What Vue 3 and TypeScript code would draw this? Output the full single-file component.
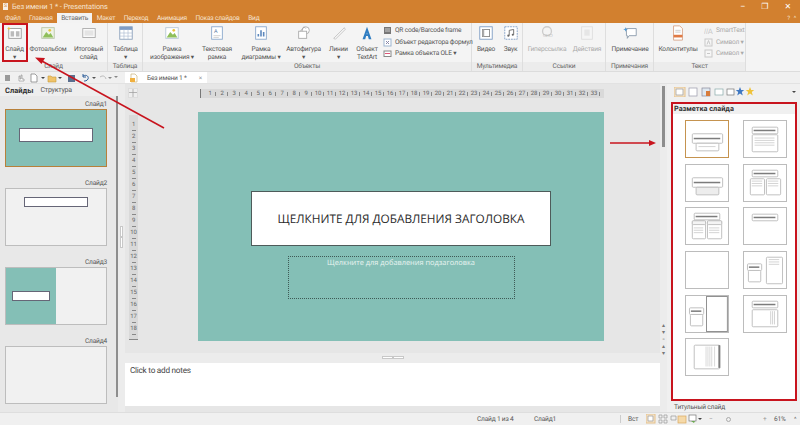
<script setup lang="ts">
type Item = { lines: string[]; w: number; icon: string; off?: boolean };
type Small = { text: string; icon: string; off?: boolean };
type Group = { label: string; w: number; pad: number; items: Item[]; small?: Small[]; smallW?: number };

const ico = {
  slide: `<rect x="2" y="4" width="14" height="11" fill="#fff" stroke="#9a9a9a"/><rect x="4" y="7" width="4" height="6" fill="#bbb"/><rect x="10" y="7" width="4" height="6" fill="#bbb"/><path d="M2 2l1 1.5L4.5 4 3 4.5 2 6 1.4 4.5 0 4l1.4-.5z" fill="#e9c43d"/>`,
  photo: `<rect x="2" y="3" width="14" height="12" fill="#eef3e6" stroke="#b9c6a6"/><path d="M3 14l4-6 3 3 2-2 3 5z" fill="#8fbf5a"/><circle cx="11" cy="6" r="1.5" fill="#e9c43d"/>`,
  sum: `<rect x="2" y="4" width="14" height="10" fill="#fafafa" stroke="#aaa"/><rect x="4" y="6" width="10" height="6" fill="#e4e4e4"/>`,
  table: `<rect x="2" y="2" width="14" height="14" fill="#fff" stroke="#8aa0bb"/><rect x="2" y="2" width="14" height="3.5" fill="#7f9cc4"/><path d="M2 9h14M2 12.5h14M6.7 5v11M11.3 5v11" stroke="#a9b9cf" stroke-width=".7"/>`,
  image: `<rect x="2" y="3" width="14" height="12" fill="#fff" stroke="#b8c8d8"/><path d="M3 14l4-6 3 3 2-2 3 5z" fill="#8fbf5a"/><circle cx="11" cy="6" r="1.5" fill="#e9c43d"/>`,
  text: `<rect x="3" y="2" width="12" height="14" fill="#fff" stroke="#8aa8cc"/><text x="5.6" y="9" font-size="6" font-family="Liberation Sans" fill="#5c7da6">A</text><path d="M5 12h8M5 14h6" stroke="#bbb" stroke-width=".7"/>`,
  chart: `<rect x="3" y="2" width="12" height="14" fill="#fff" stroke="#8aa8cc"/><path d="M6 13v-3M9 13V6M12 13V8" stroke="#5c88bd" stroke-width="1.8"/>`,
  shape: `<circle cx="11" cy="6" r="4" fill="#fff" stroke="#aaa"/><rect x="3" y="7" width="9" height="8" fill="#fff" stroke="#aaa"/><path d="M5 7l4-5 2 2" fill="none" stroke="#aaa"/>`,
  lines: `<path d="M3 15L15 3M5 16L16 5" stroke="#c4c4c4"/><path d="M3 15l2 1M15 3l1 2" stroke="#c4c4c4"/>`,
  art: `<path d="M4 16L9 2l5 14h-3l-1-3.500H8L7 16zM8.600 10.500h.800L9 8.500z" fill="#2f7dc2"/>`,
  video: `<rect x="2" y="2" width="14" height="14" fill="#fff" stroke="#7d9cc4"/><rect x="5" y="5" width="8" height="8" fill="#fff" stroke="#888"/><rect x="5" y="5" width="2" height="8" fill="#aaa"/>`,
  audio: `<rect x="2" y="2" width="14" height="14" fill="#fff" stroke="#7d9cc4" stroke-dasharray="2 1"/><path d="M7 12V6l5-1v6" fill="none" stroke="#666"/><circle cx="6" cy="12" r="1.200" fill="#666"/><circle cx="11" cy="11" r="1.200" fill="#666"/>`,
  link: `<circle cx="9" cy="7" r="5" fill="none" stroke="#ccc" stroke-width="1.500"/><text x="4.500" y="14" font-size="5" font-family="Liberation Sans" fill="#bbb">GHO</text>`,
  action: `<rect x="3" y="2" width="12" height="14" fill="#f5f5f5" stroke="#ddd"/><rect x="6" y="5" width="6" height="7" fill="#e6e6e6"/>`,
  note: `<path d="M5 4h11v8H8l-2 3v-3H5z" fill="#fff" stroke="#8a9aaa"/><path d="M2 5h4M4 3v4" stroke="#4f9ad2"/>`,
  footer: `<path d="M4 1h7l3 3v13H4z" fill="#fff" stroke="#d8a58a"/><path d="M6 6h6M6 8h6" stroke="#c9c9c9"/><rect x="4" y="11" width="10" height="3" fill="#e07a45"/>`,
  qr: `<rect x="1" y="1" width="7" height="7" fill="#777"/><path d="M2 3h5M2 5h5" stroke="#ccc"/>`,
  formula: `<rect x="1" y="1" width="7" height="7" fill="#fff" stroke="#9db5d0"/><path d="M3 3l3 3M6 3L3 6" stroke="#88a"/>`,
  ole: `<rect x="1" y="2" width="7" height="5.500" fill="#fff" stroke="#888"/><path d="M2 4.500h5" stroke="#d57"/>`,
  smart: `<text x="0" y="7.500" font-size="7.500" font-family="Liberation Sans" fill="#c8c8c8">//A</text>`,
  sym: `<rect x="1" y="1" width="7" height="7" fill="#f6f6f6" stroke="#c8c8c8"/><path d="M3 6.500l1.500-4 1.500 4" fill="none" stroke="#c8c8c8"/>`,
  sym2: `<rect x="1" y="1" width="7" height="7" fill="#f6f6f6" stroke="#c8c8c8"/><path d="M3 4.500h3" stroke="#c8c8c8"/>`,
};

const groups: Group[] = [
  { label: 'Слайд', w: 108, pad: 2, items: [
    { lines: ['Слайд', '▾'], w: 25, icon: ico.slide },
    { lines: ['Фотоальбом'], w: 42, icon: ico.photo },
    { lines: ['Итоговый', 'слайд'], w: 39, icon: ico.sum },
  ] },
  { label: 'Таблица', w: 35, pad: 0, items: [{ lines: ['Таблица', '▾'], w: 35, icon: ico.table }] },
  { label: 'Объекты', w: 329, pad: 5, items: [
    { lines: ['Рамка', 'изображения ▾'], w: 48, icon: ico.image },
    { lines: ['Текстовая', 'рамка'], w: 42, icon: ico.text },
    { lines: ['Рамка', 'диаграммы ▾'], w: 46, icon: ico.chart },
    { lines: ['Автофигура', '▾'], w: 39, icon: ico.shape },
    { lines: ['Линии', '▾'], w: 31, icon: ico.lines },
    { lines: ['Объект', 'TextArt'], w: 26, icon: ico.art },
  ], small: [
    { text: 'QR code/Barcode frame', icon: ico.qr },
    { text: 'Объект редактора формул', icon: ico.formula },
    { text: 'Рамка объекта OLE  ▾', icon: ico.ole },
  ], smallW: 92 },
  { label: 'Мультимедиа', w: 51, pad: 2, items: [
    { lines: ['Видео'], w: 24, icon: ico.video },
    { lines: ['Звук'], w: 25, icon: ico.audio },
  ] },
  { label: 'Ссылки', w: 83, pad: 0, items: [
    { lines: ['Гиперссылка'], w: 48, icon: ico.link, off: true },
    { lines: ['Действия'], w: 32, icon: ico.action, off: true },
  ] },
  { label: 'Примечания', w: 48, pad: 0, items: [{ lines: ['Примечание'], w: 48, icon: ico.note }] },
  { label: 'Текст', w: 92, pad: 1, items: [{ lines: ['Колонтитулы'], w: 46, icon: ico.footer }], small: [
    { text: 'SmartText', icon: ico.smart, off: true },
    { text: 'Символ  ▾', icon: ico.sym, off: true },
    { text: 'Символ  ▾', icon: ico.sym2, off: true },
  ], smallW: 45 },
];

const tabs = ['Файл', 'Главная', 'Вставить', 'Макет', 'Переход', 'Анимация', 'Показ слайдов', 'Вид'];
const hNums = Array.from({ length: 33 }, (_, i) => i + 1);
const vNums = Array.from({ length: 18 }, (_, i) => i + 1);
const thumbs = [
  { name: 'Слайд1', kind: 'title' },
  { name: 'Слайд2', kind: 'top' },
  { name: 'Слайд3', kind: 'half' },
  { name: 'Слайд4', kind: 'blank' },
];

const b = '#bdbdbd';
const p = (x: number, y: number, w: number, h: number, f = '#fff') =>
  `<rect x="${x}.5" y="${y}.5" width="${w}" height="${h}" rx="1" fill="${f}" stroke="${b}"/>`;
const title = (x: number, y: number, w: number, h: number) =>
  p(x, y, w, h) + `<path d="M${x + 2} ${y + h / 2 + 0.5}h${w - 4}" stroke="#7c7c7c" stroke-width="1.600"/>`;
const lines = (x: number, y: number, w: number, n: number) =>
  Array.from({ length: n }, (_, i) => `<path d="M${x} ${y + i * 2.5}h${w}" stroke="#d2d2d2"/>`).join('');

const layouts: string[] = [
  title(6, 13, 32, 10) + p(10, 23, 24, 8) + lines(13, 27, 18, 1),
  title(8, 6, 27, 7) + p(8, 14, 27, 18) + lines(11, 18, 21, 4),
  title(6, 13, 32, 10) + p(10, 23, 24, 8, '#ededed'),
  title(8, 5, 27, 7) + p(6, 14, 15, 17) + p(23, 14, 15, 17) + lines(8, 17, 11, 3) + lines(25, 17, 11, 3),
  title(8, 5, 27, 7) + p(6, 13, 14, 19) + p(22, 13, 15, 19) + p(6, 13, 14, 4, '#f4f4f4') + p(22, 13, 15, 4, '#f4f4f4') + lines(8, 21, 10, 3) + lines(24, 21, 11, 3),
  title(8, 6, 27, 7),
  '',
  title(3, 12, 15, 7) + p(4, 19, 13, 12) + p(23, 5, 17, 28) + lines(26, 8, 11, 3),
  title(3, 12, 15, 7) + p(4, 19, 13, 12) + `<rect x="21.500" y="0.500" width="22" height="37" fill="#fff" stroke="#8c8c8c"/>`,
  title(8, 5, 27, 7) + p(8, 14, 27, 18) + `<path d="M28 16v14M30 16v14M32 16v14" stroke="#d2d2d2"/>`,
  p(8, 6, 27, 25) + `<rect x="34" y="6.500" width="2" height="24" fill="#7c7c7c"/><path d="M21 8v21M23 8v21M25 8v21M27 8v21M30 8v21" stroke="#d8d8d8"/>`,
];
</script>

<template>
  <div class="app">
    <header class="titlebar">
      <div class="caption">
        <span class="logo">S</span>
        <span>Без имени 1 * - Presentations</span>
        <span class="winbtns"><i>–</i><i>❐</i><i>✕</i></span>
      </div>
      <nav class="tabs">
        <span v-for="t in tabs" :key="t" class="tab" :class="{ active: t === 'Вставить' }">{{ t }}</span>
        <span class="help">?&nbsp;&nbsp;&nbsp;^</span>
      </nav>
    </header>

    <section class="ribbon">
      <div v-for="g in groups" :key="g.label" class="group" :style="{ width: g.w + 'px' }">
        <div class="items" :style="{ paddingLeft: g.pad + 'px' }">
          <div
            v-for="it in g.items"
            :key="it.lines[0]"
            class="item"
            :class="{ off: it.off }"
            :style="{ width: it.w + 'px' }"
          >
            <svg class="bigicon" viewBox="0 0 18 18" v-html="it.icon"></svg>
            <span v-for="l in it.lines" :key="l" class="itemline">{{ l }}</span>
          </div>
          <div v-if="g.small" class="smalls" :style="{ width: g.smallW + 'px' }">
            <div v-for="s in g.small" :key="s.icon" class="small" :class="{ off: s.off }">
              <svg class="smallicon" viewBox="0 0 9 9" v-html="s.icon"></svg>
              <span>{{ s.text }}</span>
            </div>
          </div>
        </div>
        <div class="grouplabel">{{ g.label }}</div>
      </div>
    </section>

    <section class="toolbar">
      <div class="quick">
        <svg viewBox="0 0 118 10" width="118" height="10">
          <rect x="5" y="2" width="5" height="6" fill="#999" />
          <path d="M19 8V3h1v3h1V2h1v4h2v2z" fill="#fff" stroke="#888" stroke-width=".6" />
          <path d="M31 1h4l2 2v6h-6z" fill="#fff" stroke="#777" stroke-width=".7" />
          <path d="M41 4l2 2 2-2z" fill="#444" />
          <path d="M48 3h3l1 1h4v5h-8z" fill="#f0c36a" stroke="#c79a3a" stroke-width=".6" />
          <path d="M58 4l2 2 2-2z" fill="#444" />
          <rect x="68" y="2" width="7" height="7" fill="#5a6f8f" />
          <path d="M83 3c4-2 6 1 5 3s-3 2-4 2M83 1v3h3" fill="none" stroke="#2f5f9a" stroke-width="1" />
          <path d="M92 4l2 2 2-2z" fill="#555" />
          <path d="M100 4c3-2 5-1 6 2" fill="none" stroke="#bbb" />
          <path d="M108 4l2 2 2-2zM114 3l2 2 2-2z" fill="#888" />
        </svg>
      </div>
      <div class="doctab">
        <svg viewBox="0 0 10 10" width="10" height="10">
          <path d="M2 1h4l2 2v6H2z" fill="#fff" stroke="#c9b27a" stroke-width=".7" />
          <rect x="1" y="5" width="5" height="4" fill="#f0b040" />
        </svg>
        <span class="docname">Без имени 1 *</span>
        <span class="docx">×</span>
      </div>
    </section>

    <main class="body">
      <aside class="left">
        <div class="lefttabs"><b>Слайды</b><span>Структура</span></div>
        <div class="thumbs">
          <div class="thumblist">
            <div v-for="t in thumbs" :key="t.name" class="thumbwrap">
              <div class="thumbname">{{ t.name }}</div>
              <div class="thumb" :class="t.kind">
                <div v-if="t.kind === 'half'" class="halfteal"><div class="thumbbox"></div></div>
                <div v-else-if="t.kind !== 'blank'" class="thumbbox"></div>
              </div>
            </div>
          </div>
          <div class="vscroll"><div class="thumbscrollbar"></div></div>
        </div>
      </aside>

      <div class="gutter"><span class="grip"></span><span class="grip"></span></div>

      <div class="center">
        <div class="hrow">
          <svg class="corner" viewBox="0 0 10 10" width="10" height="10">
            <rect x=".5" y=".5" width="9" height="9" fill="#eee" stroke="#ddd" />
            <path d="M5 1v8M1 4.500h8" stroke="#999" stroke-width=".7" />
          </svg>
          <div class="hruler">
            <span v-for="n in hNums" :key="n" class="hnum">{{ n }}</span>
          </div>
        </div>
        <div class="work">
          <div class="vruler">
            <span v-for="n in vNums" :key="n" class="vnum">{{ n }}</span>
          </div>
          <div class="slide">
            <div class="slidetitle">ЩЕЛКНИТЕ ДЛЯ ДОБАВЛЕНИЯ ЗАГОЛОВКА</div>
            <div class="slidesub">Щелкните для добавления подзаголовка</div>
          </div>
        </div>
        <div class="splitbar"><span class="hgrip"></span><span class="hgrip"></span></div>
        <div class="notes">Click to add notes</div>
      </div>

      <div class="mainscroll">
        <div class="mainthumb"></div>
        <div class="scrollbtns"><span>▴</span><span>▾</span><span>▫</span><span>▴</span><span>▾</span></div>
      </div>

      <aside class="right">
        <div class="paneltools">
          <svg viewBox="0 0 122 10" width="122" height="10">
            <rect x="0" y="0" width="11" height="10" fill="#f6e6cf" stroke="#e3c08a" />
            <rect x="2" y="2" width="7" height="6" fill="#fff" stroke="#999" stroke-width=".7" />
            <rect x="15" y="1" width="8" height="8" fill="#fff" stroke="#99a" stroke-width=".7" />
            <rect x="28" y="1" width="8" height="8" fill="#dfe8f0" stroke="#889" stroke-width=".7" />
            <rect x="32" y="4" width="4" height="5" fill="#d77b3a" />
            <rect x="41" y="2" width="8" height="6" fill="#fff" stroke="#8aa" stroke-width=".7" />
            <rect x="53" y="2" width="7" height="6" fill="#fff" stroke="#777" stroke-width=".7" />
            <path d="M58 0l1.200 3h3l-2.400 2 1 3.500L58 6.500 55.200 8.500l1-3.500-2.400-2h3z" fill="#3f78c2" transform="translate(8 0)" />
            <path d="M68 0l1.200 3h3l-2.400 2 1 3.500L68 6.500 65.200 8.500l1-3.500-2.400-2h3z" fill="#efc23a" transform="translate(8 0)" />
            <path d="M118 4l2 2 2-2z" fill="#444" />
          </svg>
        </div>
        <div class="layoutbox">
          <div class="layouthead">Разметка слайда</div>
          <div class="layoutgrid">
            <svg
              v-for="(l, i) in layouts"
              :key="i"
              class="layoutcard"
              :class="{ chosen: i === 0 }"
              viewBox="0 0 44 38"
              v-html="l"
            ></svg>
          </div>
        </div>
        <div class="layoutname">Титульный слайд</div>
      </aside>
    </main>

    <footer class="status">
      <span class="st1">Слайд 1 из 4</span>
      <span class="st2">Слайд1</span>
      <span class="st3">Вст</span>
      <svg viewBox="0 0 60 10" width="60" height="10" class="sticons">
        <rect x="0" y="0" width="9" height="9" fill="#f6e6cf" stroke="#e3c08a" />
        <rect x="2" y="2" width="5" height="5" fill="#fff" stroke="#888" stroke-width=".6" />
        <path d="M13 1h3v3h-3zM18 1h3v3h-3zM13 6h3v3h-3zM18 6h3v3h-3z" fill="none" stroke="#999" stroke-width=".7" />
        <path d="M25 2h5v4h-5z" fill="none" stroke="#999" stroke-width=".7" />
        <rect x="32" y="2" width="8" height="7" fill="#f5d9a8" stroke="#d9a860" stroke-width=".7" />
        <rect x="43" y="1" width="7" height="6" fill="#fff" stroke="#777" stroke-width=".7" />
        <path d="M45 7l3 2 1-2z" fill="#6aa84f" />
        <path d="M52 4l2 2 2-2z" fill="#444" />
      </svg>
      <span class="st4">−</span>
      <span class="sttrack"><i class="stknob"></i></span>
      <span class="st5">+</span>
      <span class="st6">61%</span>
      <span class="st7">^</span>
    </footer>

    <svg class="overlay" viewBox="0 0 800 425" width="800" height="425">
      <rect x="3" y="24" width="24" height="37" fill="none" stroke="#c8141e" stroke-width="2" />
      <path d="M164 128L40 60" stroke="#c8141e" stroke-width="1.500" />
      <path d="M35 57.500l10 .5-3.500 6z" fill="#c8141e" />
      <path d="M610 143h40" stroke="#c8141e" stroke-width="1.500" />
      <path d="M656 143l-7-3v6z" fill="#c8141e" />
    </svg>
  </div>
</template>

<style>
html, body { margin: 0; padding: 0; background: #e6e6e6; }
</style>

<style scoped>
.app {
  position: relative;
  width: 800px;
  height: 425px;
  overflow: hidden;
  display: flex;
  flex-direction: column;
  font-family: Roboto, "Noto Sans", sans-serif;
  font-size: 6.600px;
  letter-spacing: -0.2px;
  color: #555;
  background: #e6e6e6;
  text-rendering: geometricPrecision;
}
.titlebar { height: 23px; background: #d2802f; color: #f6e3cf; flex: none; }
.caption { height: 13px; display: flex; align-items: center; padding-left: 3px; gap: 4px; font-size: 7.400px; letter-spacing: -0.1px; }
.logo { width: 5px; height: 7px; background: #f8efe4; color: #c8752a; font-size: 5px; line-height: 7px; text-align: center; }
.winbtns { margin-left: auto; display: flex; gap: 16px; padding-right: 9px; color: #fff; font-size: 8px; }
.winbtns i { font-style: normal; }
.tabs { height: 10px; display: flex; align-items: center; padding-left: 5px; gap: 8.500px; font-size: 6.600px; position: relative; }
.tab { line-height: 10px; }
.tab.active { background: #f3f3f3; color: #666; padding: 0 4px; margin: 0 -4px; height: 10px; }
.help { margin-left: auto; padding-right: 4px; font-size: 6px; }
.ribbon { height: 49px; flex: none; display: flex; background: #f4f4f4; border-bottom: 1px solid #dcdcdc; box-sizing: border-box; }
.group { display: flex; flex-direction: column; border-right: 1px solid #dedede; box-sizing: border-box; flex: none; }
.items { flex: 1; display: flex; min-height: 0; }
.item { display: flex; flex-direction: column; align-items: center; flex: none; line-height: 8.300px; color: #555; white-space: nowrap; padding-top: 2px; box-sizing: border-box; }
.item.off { color: #aaa; }
.bigicon { width: 16px; height: 16px; margin-bottom: 3.500px; flex: none; }
.itemline { display: block; }
.smalls { display: flex; flex-direction: column; gap: 2.500px; padding-top: 3px; flex: none; }
.small { display: flex; align-items: center; gap: 3px; white-space: nowrap; line-height: 9px; padding-left: 3px; color: #555; }
.small.off { color: #aaa; }
.smallicon { width: 9px; height: 9px; flex: none; }
.grouplabel { height: 9px; background: #ececec; text-align: center; line-height: 9px; color: #666; }
.toolbar { height: 12px; flex: none; display: flex; align-items: flex-end; background: #f0f0f0; border-bottom: 1px solid #e2e2e2; box-sizing: border-box; }
.quick { width: 125px; height: 10px; flex: none; }
.quick svg { display: block; }
.doctab { width: 82px; height: 11px; background: #fff; display: flex; align-items: center; padding-left: 4px; box-sizing: border-box; color: #555; white-space: nowrap; }
.docname { margin-left: 8px; }
.docx { margin-left: auto; padding-right: 5px; color: #888; }
.body { flex: 1; display: flex; min-height: 0; }
.left { width: 118px; flex: none; display: flex; flex-direction: column; background: #e8e8e8; }
.lefttabs { height: 12px; display: flex; align-items: center; gap: 7px; padding-left: 5px; font-size: 7px; color: #555; flex: none; background: #eee; }
.lefttabs b { color: #333; font-weight: 700; font-size: 7.500px; letter-spacing: 0; }
.thumbs { flex: 1; display: flex; min-height: 0; }
.thumblist { width: 116px; flex: none; padding-top: 4px; box-sizing: border-box; }
.thumbwrap { margin-left: 5px; width: 102px; margin-bottom: 12px; }
.thumbname { text-align: right; line-height: 9px; color: #555; }
.thumb { height: 58px; box-sizing: border-box; border: 1px solid #bdbdbd; background: #f1f1f1; display: flex; justify-content: center; position: relative; }
.thumb.title { background: #84bfb6; border: 1.500px solid #b8803a; align-items: center; }
.thumb.title .thumbbox { width: 74px; height: 14px; margin-top: -7px; }
.thumbbox { width: 64px; height: 10px; margin-top: 8px; background: #fff; border: 1px solid #667; box-sizing: border-box; }
.halfteal { width: 50px; background: #84bfb6; margin-right: auto; display: flex; align-items: center; justify-content: center; }
.halfteal .thumbbox { width: 38px; height: 10px; margin: 0; }
.vscroll { width: 2px; }
.thumbscrollbar { width: 2px; height: 301px; background: #8e8e8e; }
.gutter { width: 7px; flex: none; display: flex; flex-direction: column; justify-content: center; align-items: center; background: #ececec; padding-bottom: 22px; box-sizing: border-box; }
.grip { width: 3px; height: 11px; background: #fff; border: 1px solid #c8c8c8; box-sizing: border-box; }
.center { width: 535px; flex: none; display: flex; flex-direction: column; background: #e6e6e6; }
.hrow { height: 14px; display: flex; align-items: flex-end; flex: none; }
.corner { margin-left: 3px; flex: none; display: block; }
.hruler { margin-left: 62px; width: 404px; height: 9px; background: #d9d9d9; border-left: 1px solid #777; display: flex; box-sizing: border-box; font-size: 6px; color: #666; padding-left: 3px; overflow: hidden; }
.hnum { width: 12px; flex: none; text-align: center; line-height: 9px; background: linear-gradient(#888, #888) right center / 1px 4px no-repeat; }
.work { height: 255px; display: flex; flex: none; }
.vruler { width: 9px; height: 225px; margin: 17px 0 0 4px; background: #d9d9d9; border-bottom: 1px solid #888; font-size: 6px; color: #666; display: flex; flex-direction: column; box-sizing: border-box; padding-top: 4px; flex: none; align-items: stretch; text-align: center; }
.vnum { height: 12px; line-height: 12px; flex: none; background: linear-gradient(#888, #888) center bottom / 4px 1px no-repeat; }
.slide { width: 406px; height: 229px; margin: 14px 0 0 60px; background: #84bfb6; flex: none; display: flex; flex-direction: column; align-items: center; box-sizing: border-box; padding: 79px 0 0 0; }
.slidetitle { width: 300px; height: 55px; box-sizing: border-box; border: 1px solid #4e5b5a; background: #fff; color: #2a2a2a; display: flex; align-items: center; justify-content: center; font-size: 11.800px; letter-spacing: 0; font-family: "Open Sans", sans-serif; }
.slidesub { width: 227px; height: 43px; margin-top: 10px; box-sizing: border-box; border: 1px dotted #3e5a56; color: #e8f4f1; text-align: center; font-size: 7.400px; letter-spacing: 0; line-height: 10px; padding-top: 1px; font-family: "Open Sans", sans-serif; }
.splitbar { height: 10px; flex: none; display: flex; justify-content: center; align-items: flex-start; padding-top: 3px; box-sizing: border-box; background: #ececec; }
.hgrip { width: 11px; height: 3px; background: #fff; border: 1px solid #c8c8c8; box-sizing: border-box; }
.notes { height: 43px; flex: none; background: #fff; font-size: 8.200px; letter-spacing: -0.25px; color: #444; padding: 3px 5px; box-sizing: border-box; line-height: 11px; }
.mainscroll { width: 7px; flex: none; background: #ececec; display: flex; flex-direction: column; align-items: center; }
.mainthumb { width: 2.500px; height: 61px; background: #8e8e8e; margin-top: 2px; flex: none; }
.scrollbtns { margin-top: 175px; display: flex; flex-direction: column; font-size: 6px; line-height: 7px; color: #777; text-align: center; }
.right { flex: 1; display: flex; flex-direction: column; padding-left: 4px; background: #f0f0f0; min-width: 0; }
.paneltools { height: 18px; padding: 3px 0 0 3px; box-sizing: border-box; flex: none; }
.paneltools svg { display: block; }
.layoutbox { width: 126px; height: 299px; box-sizing: border-box; border: 2px solid #c8141e; background: #fff; flex: none; }
.layouthead { height: 10px; background: #f0f0f0; font-size: 7.300px; letter-spacing: 0; font-weight: 700; line-height: 10px; color: #333; padding-left: 1px; }
.layoutgrid { display: grid; grid-template-columns: 44px 44px; column-gap: 14px; row-gap: 5.700px; padding: 6px 0 0 12px; }
.layoutcard { width: 44px; height: 38px; box-sizing: border-box; border: 1px solid #bcbcbc; background: #fff; display: block; }
.layoutcard.chosen { border: 1.500px solid #c5934f; }
.layoutname { line-height: 10px; padding: 1px 0 0 3px; color: #555; }
.status { height: 13px; flex: none; background: #f0f0f0; border-top: 1px solid #dedede; box-sizing: border-box; display: flex; align-items: center; color: #555; position: relative; }
.st1 { margin-left: 477px; width: 57px; }
.st2 { width: 86px; border-right: 1px solid #ccc; }
.st3 { margin-left: 7px; width: 18px; }
.sticons { flex: none; }
.st4 { margin-left: 3px; width: 17px; color: #999; }
.sttrack { width: 37px; position: relative; height: 5px; }
.stknob { position: absolute; left: 0; top: 0; width: 5px; height: 5px; box-sizing: border-box; border-radius: 50%; border: 1px solid #aaa; }
.st5 { width: 11px; color: #999; }
.st6 { width: 20px; }
.st7 { font-size: 6px; }
.overlay { position: absolute; left: 0; top: 0; pointer-events: none; }
</style>
